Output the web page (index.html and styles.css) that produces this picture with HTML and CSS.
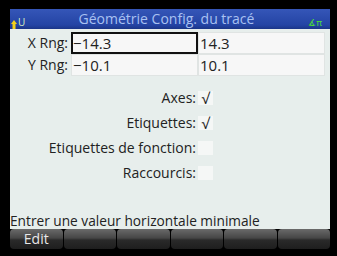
FILE: index.html
```html
<!DOCTYPE html>
<html lang="fr">

<head>
    <meta charset="UTF-8">
    <meta name="viewport" content="width=device-width, initial-scale=1.0">
    <title>Géométrie Config. du tracé</title>
    <link rel="stylesheet" href="styles.css">
</head>

<body>
    <div class="screen">
        <div class="header">
            <span class="shift">
                <svg width="6" height="9" viewBox="0 0 6 9">
                    <path d="M3 0 L6 4 L4.5 4 L4.5 9 L1.5 9 L1.5 4 L0 4 Z" fill="#f4d21a" />
                </svg>U</span>
            <span class="title">Géométrie Config. du tracé</span>
            <span class="mode">∡π</span>
        </div>

        <div class="ranges">
            <span class="label">X Rng:</span>
            <span class="field selected">−14.3</span>
            <span class="field">14.3</span>
            <span class="label">Y Rng:</span>
            <span class="field">−10.1</span>
            <span class="field">10.1</span>
        </div>

        <div class="checks">
            <div class="check-row">
                <span class="label">Axes:</span>
                <span class="box">√</span>
            </div>
            <div class="check-row">
                <span class="label">Etiquettes:</span>
                <span class="box">√</span>
            </div>
            <div class="check-row">
                <span class="label">Etiquettes de fonction:</span>
                <span class="box"></span>
            </div>
            <div class="check-row">
                <span class="label">Raccourcis:</span>
                <span class="box"></span>
            </div>
        </div>

        <div class="help">Entrer une valeur horizontale minimale</div>

        <div class="softkeys">
            <span class="key">Edit</span>
            <span class="key"></span>
            <span class="key"></span>
            <span class="key"></span>
            <span class="key"></span>
            <span class="key"></span>
        </div>
    </div>
</body>

</html>
```

FILE: styles.css
```css
* {
    margin: 0;
    padding: 0;
    box-sizing: border-box;
}

body {
    background: #000;
    width: 337px;
    height: 256px;
    overflow: hidden;
    font-family: "Open Sans", "Noto Sans", sans-serif;
    font-size: 14px;
    color: #222;
}

.screen {
    width: 320px;
    height: 240px;
    margin: 9px 0 0 10px;
    background: #e7eeec;
    display: flex;
    flex-direction: column;
}

.header {
    height: 20px;
    background: linear-gradient(#3556b8, #2444a4 80%, #1a3588);
    display: flex;
    align-items: center;
    justify-content: space-between;
    padding: 0 8px 0 1px;
}

.title {
    color: #a9c1f2;
    font-size: 14px;
    line-height: 20px;
}

.shift {
    color: #d8f0c0;
    font-size: 10px;
    width: 20px;
    margin-top: 5px;
    display: flex;
    align-items: flex-end;
    gap: 1px;
}

.mode {
    color: #4ee032;
    font-size: 9px;
    width: 20px;
    text-align: right;
    margin-top: 6px;
}

.ranges {
    display: grid;
    grid-template-columns: 61px 127px 127px;
    grid-auto-rows: 22px;
    margin-top: 3px;
}

.ranges .label {
    text-align: right;
    padding-right: 3px;
    line-height: 22px;
}

.field {
    background: #f7f7f7;
    border: 1px solid #e0e4e3;
    line-height: 20px;
    padding-left: 1px;
    font-size: 15px;
}

.field.selected {
    border: 2px solid #111;
    line-height: 18px;
    padding-left: 0;
}

.checks {
    margin-top: 9px;
}

.check-row {
    display: flex;
    align-items: center;
    height: 25px;
}

.check-row .label {
    width: 188px;
    text-align: right;
    padding-right: 2px;
}

.box {
    width: 15px;
    height: 14px;
    background: #f5f7f6;
    font-size: 15px;
    line-height: 14px;
    text-align: center;
    color: #222;
}

.help {
    margin-top: auto;
    line-height: 16px;
    font-size: 13.7px;
}

.softkeys {
    display: flex;
    height: 20px;
    background: #000;
    gap: 1px;
}

.key {
    flex: 1;
    border-radius: 4px;
    background: linear-gradient(#6a6a6a, #464646 45%, #2a2a2a 55%, #1e1e1e);
    color: #e8e8e8;
    text-align: center;
    line-height: 20px;
    font-size: 14px;
}
```
